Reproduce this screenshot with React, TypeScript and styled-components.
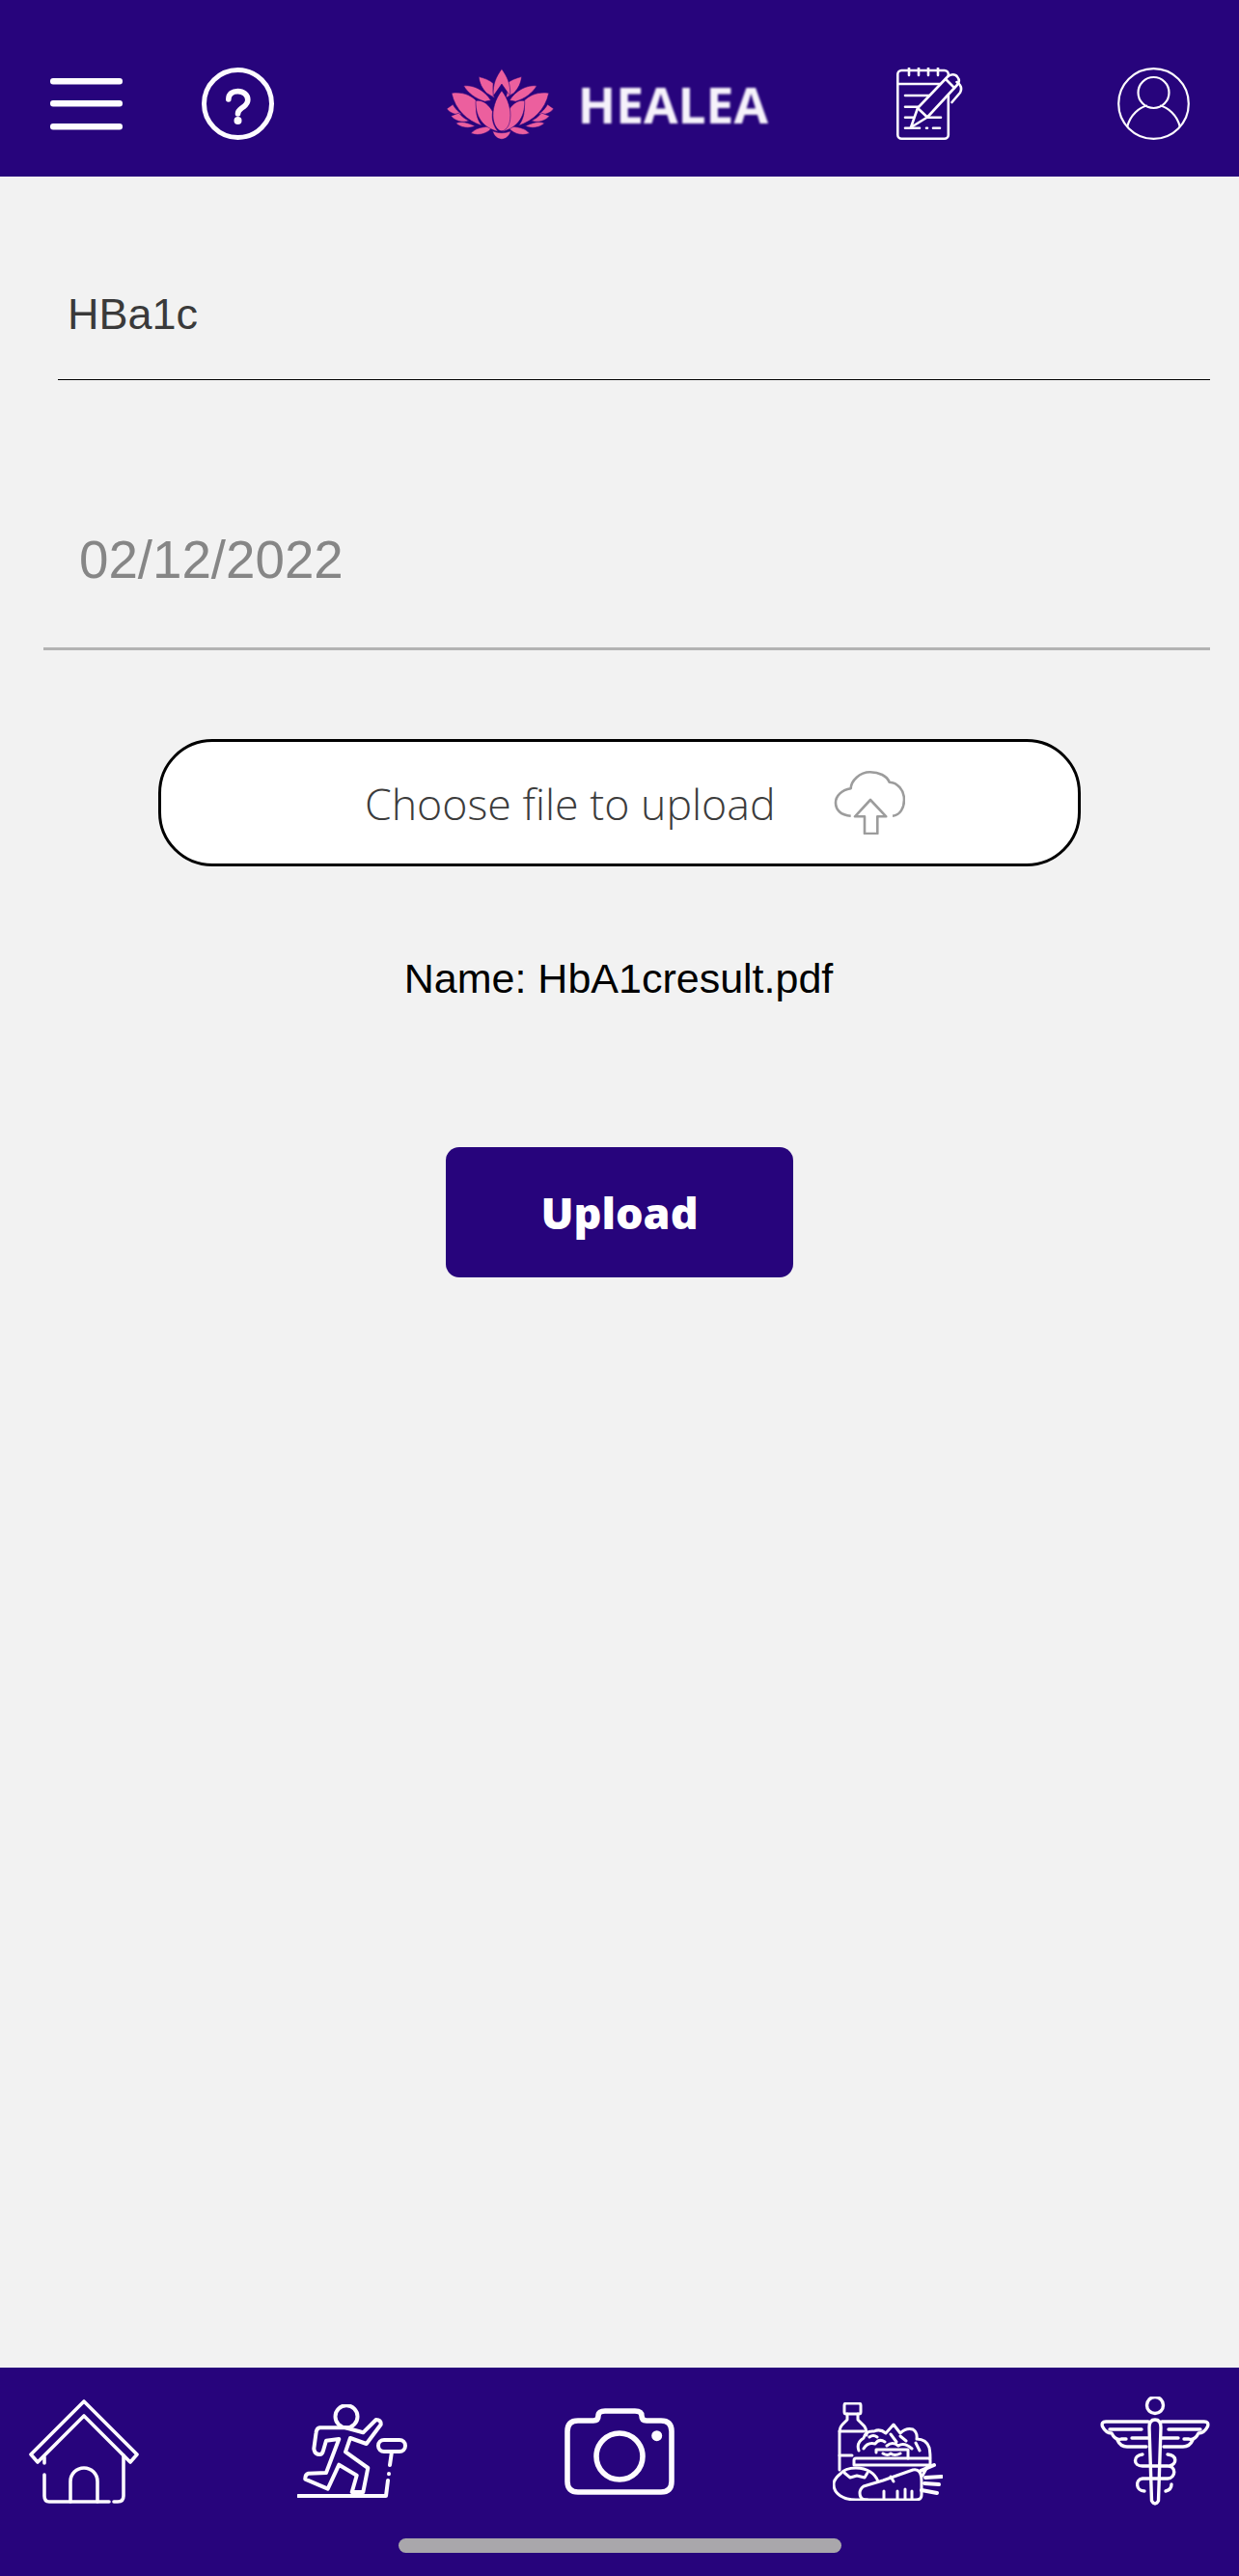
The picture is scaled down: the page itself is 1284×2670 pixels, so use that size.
import React from 'react';
import styled, { createGlobalStyle } from 'styled-components';

const PURPLE = '#27047c';
const WHITE = '#fdfbff';

const GlobalStyle = createGlobalStyle`
	html, body {
		margin: 0;
		padding: 0;
		background: #f2f2f2;
	}
`;

const MenuIcon = () => (
	<HeaderSvg width="75" height="75" viewBox="0 0 75 75" fill={WHITE}>
		<rect x="0" y="11" width="75" height="6.5" rx="3" />
		<rect x="0" y="34" width="75" height="6.5" rx="3" />
		<rect x="0" y="58" width="75" height="6.5" rx="3" />
	</HeaderSvg>
);

const HelpIcon = () => (
	<HeaderSvg width="75" height="75" viewBox="0 0 75 75" fill="none" stroke={WHITE} strokeLinecap="round">
		<circle cx="37.5" cy="37.5" r="35" strokeWidth="5" />
		<path d="M27.8 33C27.8 27 32 24.6 37.5 24.6C43 24.6 47.8 28 47.8 33.5C47.8 38 44.5 40 41.5 42C38.7 44 37.5 45 37.5 48" strokeWidth="5.6" />
		<circle cx="37.5" cy="55" r="4" fill={WHITE} stroke="none" />
	</HeaderSvg>
);

const PETAL = '#ec5f9e';

const LotusSide = () => (
	<g>
		<path d="M40 190L60 176C68 190 78 200 90 208C70 212 50 204 40 190Z" />
		<path d="M54 214L80 204C90 216 100 224 114 230C92 238 66 230 54 214Z" />
		<path d="M70 238C88 230 110 236 134 248C114 256 88 254 70 238Z" />
		<path d="M120 272C134 254 160 248 192 250C178 270 150 282 120 272Z" />
		<path d="M56 138C88 133 120 143 140 166C134 196 138 222 156 246C108 230 68 194 56 138Z" />
		<path d="M96 114C128 110 164 128 186 162L166 166C134 156 110 138 96 114Z" />
		<path d="M146 84C164 88 184 96 194 106C192 122 194 140 198 154L172 138C156 122 148 104 146 84Z" />
		<path d="M136 164C160 158 182 180 192 200C188 224 194 248 210 266C166 254 134 224 136 164Z" />
	</g>
);

const Logo = () => (
	<LogoBox>
		<svg width="118" height="78" viewBox="40 58 354 234" fill={PETAL} stroke={PURPLE} strokeWidth="1.8" strokeLinejoin="round">
			<LotusSide />
			<g transform="translate(434 0) scale(-1 1)">
				<LotusSide />
			</g>
			<path d="M222 58C204 84 192 106 194 148L222 108L250 148C252 106 240 84 222 58Z" />
			<path d="M222 130C200 158 190 194 194 224C198 250 212 264 222 264C232 264 248 250 250 224C254 194 244 158 222 130Z" />
			<path d="M222 270C212 270 202 268 192 264C196 280 208 291 222 291C236 291 248 280 252 264C242 268 232 270 222 270Z" />
		</svg>
		<LogoText>HEALEA</LogoText>
	</LogoBox>
);

const NotesIcon = () => (
	<HeaderSvg width="69" height="75" viewBox="0 0 69 75" fill="none" stroke={WHITE} strokeWidth="2.6" strokeLinecap="round" strokeLinejoin="round">
		<rect x="1.3" y="3" width="52.5" height="70.7" rx="4" />
		<path d="M1.3 17H53.8M13 0.5V8M23 0.5V8M33 0.5V8M43 0.5V8" />
		<path d="M9 29H38M9 40.7H27M9 51.7H46M9 62.7H24M31 62.7H32M38 62.7H45" />
		<path d="M15 62L22 42L53 9.5C56 6.5 61 6.5 63 9.5C65.5 12.5 65 16 62.5 18.5L32 51.5Z" fill={PURPLE} />
		<path d="M22 42L32 51.5M51 12L60 21" />
		<path d="M62.5 15C67 18 68 22 66 26L57.5 36" />
	</HeaderSvg>
);

const ProfileIcon = () => (
	<HeaderSvg width="75" height="75" viewBox="0 0 75 75" fill="none" stroke={WHITE} strokeWidth="2.2">
		<circle cx="37.5" cy="37.5" r="36.3" />
		<circle cx="37.5" cy="26" r="16" />
		<path d="M10 62C13 49 23 41 31 39.5M65 62C62 49 52 41 44 39.5" />
	</HeaderSvg>
);

const CloudIcon = () => (
	<CloudSvg width="74" height="66" viewBox="0 0 74 66" fill="none" stroke="#9c9c9c" strokeWidth="2.6" strokeLinejoin="round">
		<path d="M17.7 46.7C7 46 2 40 2 33C2 26 8 20 17.7 18.3C18 10 27 1.3 37.7 1.3C47 1.3 55 5 57.7 11.7C66 12 73 20 73 30C73 38 69 46 61 46.7" />
		<path d="M38 30L22 47.3H32V65H45.3V47.3H54.3Z" />
	</CloudSvg>
);

const HomeIcon = () => (
	<svg width="114" height="108" viewBox="0 0 114 108" fill="none" stroke={WHITE} strokeWidth="3.6" strokeLinecap="round" strokeLinejoin="round">
		<path d="M57 2L112 57L105 65L57 17L9 65L2 57Z" />
		<path d="M16 60V66M16 78V100Q16 106 21 106H83M88 106H92Q98 106 98 100V58" />
		<path d="M43 106V85A14 14 0 0 1 71 85V106" />
	</svg>
);

const RunnerIcon = () => (
	<svg width="114" height="98" viewBox="0 0 114 98" fill="none" stroke={WHITE} strokeWidth="4" strokeLinecap="round" strokeLinejoin="round">
		<circle cx="51" cy="12.7" r="11.5" />
		<path d="M23.3 24.3Q20 25 19.5 30L17.3 46Q18 52 23.3 52Q26 52 27 48L30 37.7L43.3 36L30 71L11.7 71.7Q8 73 8.3 77.7L31.7 87.7L43.3 62.7L61.7 73.7L56.7 91H68.3L73.3 66L50 49.3L55 35L71.7 41L86.7 21Q87 16 81.7 16L68.3 29.3L50 24.3Z" />
		<path d="M1 95H92L94 79M95 72V72.2M96 63L98 49" />
		<rect x="84" y="37" width="28" height="12" rx="6" />
	</svg>
);

const CameraIcon = () => (
	<svg width="114" height="90" viewBox="0 0 114 90" fill="none" stroke={WHITE} strokeWidth="5.6" strokeLinejoin="round">
		<path d="M14 13H30Q35 13 35 8Q35 3 42 3H73Q80 3 80 8Q80 13 85 13H100Q111 13 111 24V76Q111 87 100 87H14Q3 87 3 76V24Q3 13 14 13Z" />
		<circle cx="57" cy="50" r="24" />
		<circle cx="95.7" cy="28.7" r="5.5" fill={WHITE} stroke="none" />
	</svg>
);

const FoodIcon = () => (
	<svg width="114" height="102" viewBox="0 0 114 102" fill="none" stroke={WHITE} strokeWidth="3" strokeLinecap="round" strokeLinejoin="round">
		<rect x="12" y="1" width="17" height="11" rx="2" />
		<path d="M15 12V18L10 23Q7 26 7 32V70M26 12V18L31 23Q35 26 35 34" />
		<path d="M7 30H32M7 55H20" />
		<path d="M27 50Q24 42 32 37Q34 29 43 30Q49 27 55 32L63 23L70 32Q76 26 83 28Q88 31 87 38Q97 38 100 47Q101 52 101 58" />
		<path d="M32 48Q36 41 44 43Q48 37 54 41M38 36Q42 33 46 36M60 33L66 41M70 35L76 40M56 45Q62 40 68 45Q74 41 82 48M86 42L90 50" />
		<path d="M45 49H78V58M45 49V52M52 53Q57 56 60 53Q64 56 70 53" />
		<path d="M22 65V60Q22 58 24 58H99Q101 58 101 60V65H22M99 65L93 76" />
		<path d="M8 74C12 69 18 68 24 68C36 68 44 74 47 82M8 74C3 78 1 82 1 85C1 95 11 101 24 101H36" />
		<path d="M32 87L52 81L83 70Q92 68 92 82V96Q92 101 86 101H35Q28 101 28 94Q28 90 32 87Z" />
		<path d="M12 73L18 78L25 76L33 78L36 73M53 92V100M67 92V100M75 90V100M82 92V100M60 77L63 82" />
		<path d="M91 71L105 65M96 78L113 77M95 84L110 85M92 91L108 94" strokeWidth="4" />
	</svg>
);

const CaduceusIcon = () => (
	<svg width="114" height="114" viewBox="0 0 114 114" fill="none" stroke={WHITE} strokeWidth="3.4" strokeLinecap="round" strokeLinejoin="round">
		<circle cx="57" cy="9" r="8.5" />
		<path d="M51 32Q51 24 57 24Q63 24 63 32L60.5 108Q57 114 53.5 108Z" />
		<path d="M50 26H6Q1 26 2.5 31Q6 38 12 38Q16 46 22 44H27M33 43H50M18 45Q21 52 28 52H48" />
		<path d="M64 26H108Q113 26 111.5 31Q108 38 102 38Q98 46 92 44H87M81 43H64M96 45Q93 52 86 52H66" />
		<path d="M10 34H43M71 34H104" />
		<path d="M44 60C34 61 34 72 44 72H70C79 72 79 84 70 85H44C36 86 37 98 46 98M70 60C80 61 80 70 72 72M68 98C72 97 74 94 74 91" />
	</svg>
);

export default function App() {
	return (
		<Page>
			<GlobalStyle />
			<Header>
				<HeaderSlot>
					<MenuIcon />
				</HeaderSlot>
				<HeaderSlot $left={82}>
					<HelpIcon />
				</HeaderSlot>
				<HeaderSlot $left={179}>
					<Logo />
				</HeaderSlot>
				<HeaderSlot $left={133}>
					<NotesIcon />
				</HeaderSlot>
				<HeaderSlot $left={160}>
					<ProfileIcon />
				</HeaderSlot>
			</Header>
			<Main>
				<NameField>HBa1c</NameField>
				<DateField>02/12/2022</DateField>
				<FilePicker>
					<FilePickerLabel>Choose file to upload</FilePickerLabel>
					<CloudIcon />
				</FilePicker>
				<FileName>Name: HbA1cresult.pdf</FileName>
				<UploadButton>Upload</UploadButton>
			</Main>
			<Footer>
				<TabRow>
					<HomeIcon />
					<RunnerIcon />
					<CameraIcon />
					<FoodIcon />
					<CaduceusIcon />
				</TabRow>
				<HomeIndicator />
			</Footer>
		</Page>
	);
}

const Page = styled.div`
	display: flex;
	flex-direction: column;
	width: 1284px;
	height: 2670px;
	overflow: hidden;
	background: #f2f2f2;
`;

const Header = styled.header`
	display: flex;
	align-items: center;
	flex: 0 0 183px;
	box-sizing: border-box;
	padding: 32px 0 0 52px;
	background: ${PURPLE};
`;

const HeaderSlot = styled.div<{ $left?: number }>`
	display: flex;
	flex: 0 0 auto;
	margin-left: ${p => p.$left ?? 0}px;
`;

const HeaderSvg = styled.svg`
	display: block;
`;

const LogoBox = styled.div`
	display: flex;
	align-items: center;
	gap: 25px;
	width: 333px;
`;

const LogoText = styled.span`
	font-family: 'Open Sans', sans-serif;
	font-size: 51.5px;
	font-weight: 700;
	line-height: 60px;
	color: #f6f2fb;
	filter: blur(1px);
`;

const Main = styled.main`
	display: flex;
	flex-direction: column;
	flex: 1 1 auto;
`;

const NameField = styled.div`
	margin: 110px 30px 0 60px;
	padding: 0 0 34px 10px;
	border-bottom: 1px solid #000;
	font-family: 'Liberation Sans', sans-serif;
	font-size: 45px;
	line-height: 66px;
	color: #3a3a3a;
`;

const DateField = styled.div`
	margin: 153px 30px 0 45px;
	padding: 0 0 58px 37px;
	border-bottom: 3px solid #b3b3b3;
	font-family: 'Liberation Sans', sans-serif;
	font-size: 54.7px;
	line-height: 66px;
	color: #868686;
`;

const FilePicker = styled.div`
	display: flex;
	align-items: center;
	box-sizing: border-box;
	width: 956px;
	height: 132px;
	margin: 92px 0 0 164px;
	padding-left: 211px;
	gap: 60px;
	border: 3px solid #000;
	border-radius: 56px;
	background: #fff;
`;

const FilePickerLabel = styled.span`
	font-family: 'Open Sans', sans-serif;
	font-size: 44.7px;
	font-weight: 300;
	color: #3c3c3c;
`;

const CloudSvg = styled.svg`
	display: block;
	filter: blur(0.4px);
`;

const FileName = styled.div`
	margin: 86px 2px 0 0;
	font-family: 'Liberation Sans', sans-serif;
	font-size: 43px;
	line-height: 60px;
	text-align: center;
	color: #000;
`;

const UploadButton = styled.button`
	align-self: center;
	width: 360px;
	height: 135px;
	margin-top: 145px;
	padding: 0;
	border: none;
	border-radius: 14px;
	background: ${PURPLE};
	font-family: 'Open Sans', sans-serif;
	font-size: 45px;
	font-weight: 800;
	color: #fff;
`;

const Footer = styled.footer`
	display: flex;
	flex-direction: column;
	flex: 0 0 216px;
	background: ${PURPLE};
`;

const TabRow = styled.nav`
	display: flex;
	align-items: center;
	justify-content: space-between;
	height: 174px;
	padding: 0 30px;
`;

const HomeIndicator = styled.div`
	align-self: center;
	width: 459px;
	height: 15px;
	margin-top: 3px;
	border-radius: 8px;
	background: #a9a7ab;
`;
